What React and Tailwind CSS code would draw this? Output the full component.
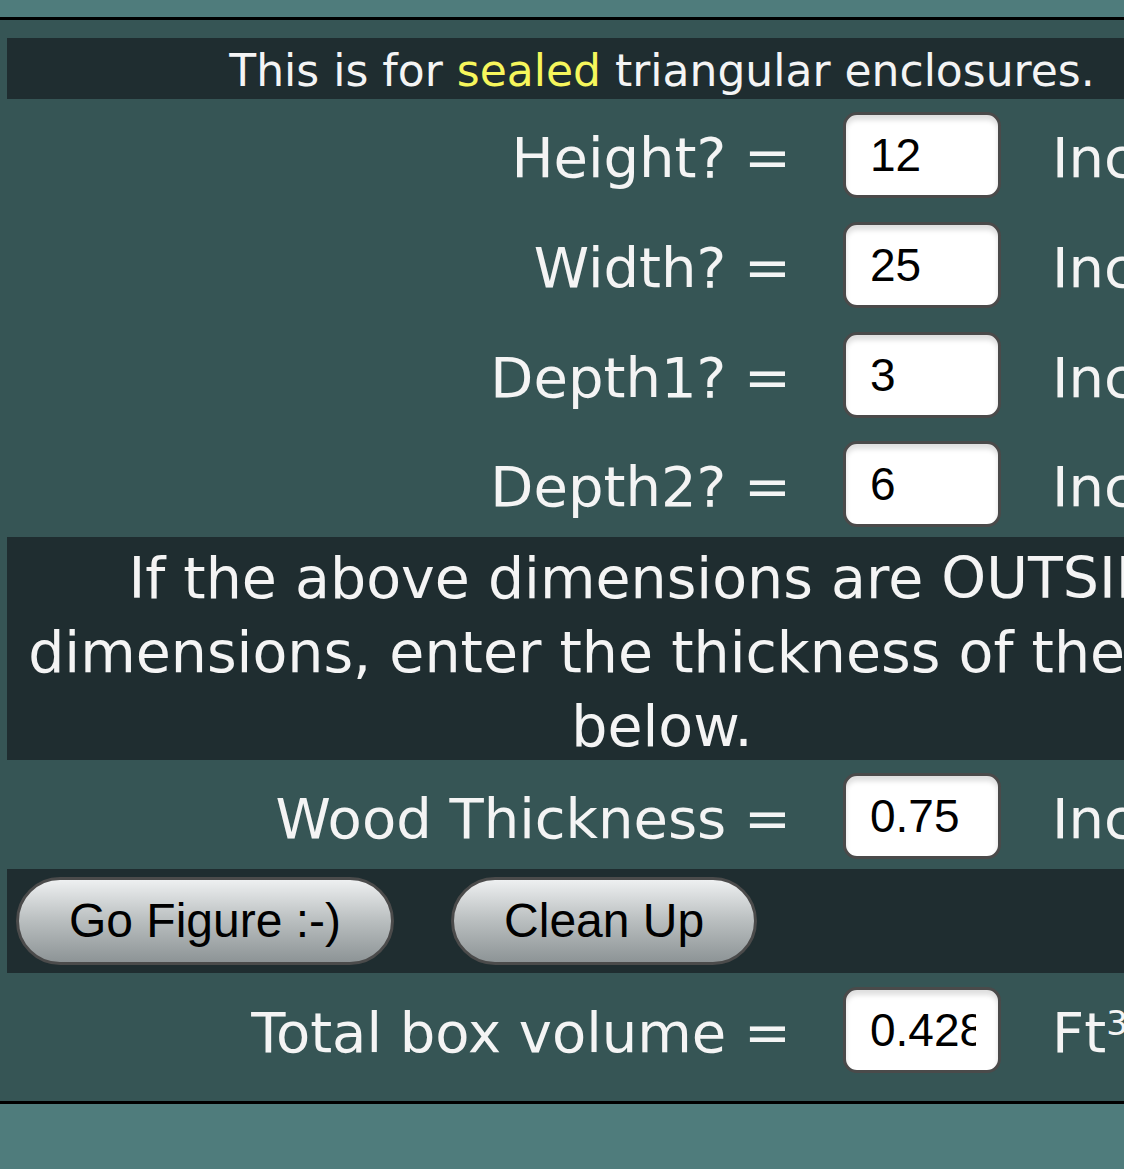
const FONT = { fontFamily: '"DejaVu Sans", Verdana, sans-serif' }
const ARIAL = { fontFamily: '"Liberation Sans", Arial, sans-serif' }

const rows = [
  { label: 'Height? =', value: '12', mt: 'mt-[13px]' },
  { label: 'Width? =', value: '25', mt: 'mt-[24px]' },
  { label: 'Depth1? =', value: '3', mt: 'mt-[24px]' },
  { label: 'Depth2? =', value: '6', mt: 'mt-[23px]' },
]

function Row({ label, value, unit = 'Inches', className = '' }) {
  return (
    <div className={`flex h-[86px] items-center ${className}`}>
      <div className="w-[784px] shrink-0 pt-[6px] text-right text-[56px] leading-none text-[#f4f4f4]">
        {label}
      </div>
      <input
        readOnly
        defaultValue={value}
        style={ARIAL}
        className="ml-[52px] h-[86px] w-[158px] shrink-0 rounded-[14px] border-[3px] border-[#4a4a4a] bg-white pl-[24px] pr-[22px] text-[46px] text-black shadow-[inset_0_5px_5px_rgba(0,0,0,0.13)] outline-none"
      />
      <div className="ml-[51px] shrink-0 pt-[6px] text-[56px] leading-none text-[#f4f4f4]">{unit}</div>
    </div>
  )
}

export default function App() {
  return (
    <div style={FONT} className="min-h-screen w-full overflow-hidden bg-[#4f7c7c] pt-[17px]">
      <div className="border-y-[3px] border-black bg-[#365555] pt-[18px] pb-[28px]">
        <div className="ml-[7px] w-[1310px]">
          <div className="flex h-[61px] items-center justify-center bg-[#1f2d30] pt-[4px] text-[44px] text-[#f4f4f4]">
            <span>
              This is for <span className="text-[#f6f65c]">sealed</span> triangular enclosures.
            </span>
          </div>

          {rows.map((r) => (
            <Row key={r.label} label={r.label} value={r.value} className={r.mt} />
          ))}

          <div className="mt-[10px] h-[223px] overflow-hidden bg-[#1f2d30] pt-[4px] text-center text-[57px] leading-[74px] text-[#f4f4f4]">
            If the above dimensions are OUTSIDE dimensions, enter the thickness of the wood below.
          </div>

          <Row label="Wood Thickness =" value="0.75" className="mt-[13px]" />

          <div className="mt-[10px] flex h-[104px] items-center gap-[57px] bg-[#1f2d30] pl-[9px]">
            <button
              style={ARIAL}
              className="h-[88px] rounded-full border-[3px] border-[#4b4b4b] bg-gradient-to-b from-[#eef0f1] via-[#b9bebf] to-[#8d9496] px-[50px] text-[48px] text-black"
            >
              Go Figure :-)
            </button>
            <button
              style={ARIAL}
              className="h-[88px] rounded-full border-[3px] border-[#4b4b4b] bg-gradient-to-b from-[#eef0f1] via-[#b9bebf] to-[#8d9496] px-[50px] text-[48px] text-black"
            >
              Clean Up
            </button>
          </div>

          <Row
            label="Total box volume ="
            value="0.4285714"
            unit={
              <span>
                Ft<sup className="text-[34px]">3</sup>
              </span>
            }
            className="mt-[14px]"
          />
        </div>
      </div>
    </div>
  )
}
